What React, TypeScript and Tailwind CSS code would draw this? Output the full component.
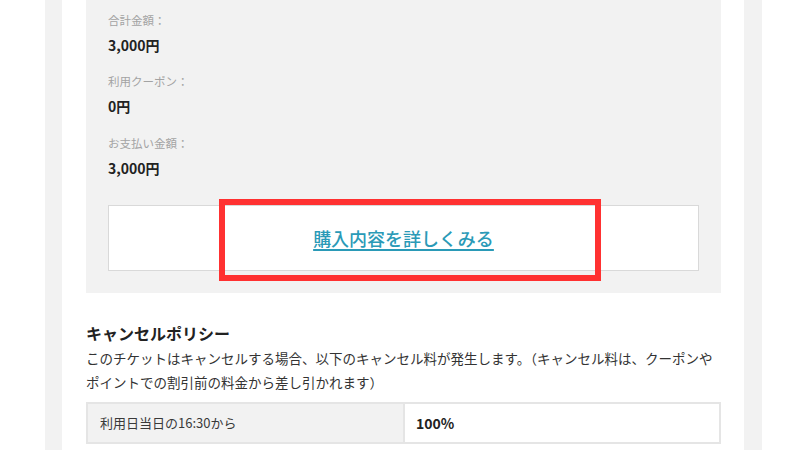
import React from "react";

const rows = [
  { label: "合計金額：", value: "3,000円" },
  { label: "利用クーポン：", value: "0円" },
  { label: "お支払い金額：", value: "3,000円" },
];

const App = () => {
  return (
    <div
      className="w-[800px] h-[450px] overflow-hidden bg-white pl-[45px]"
      style={{ fontFamily: '"Noto Sans CJK JP", "Noto Sans", sans-serif' }}
    >
      <div className="w-[717px] h-full border-l-[17px] border-r-[18px] border-[#f2f2f2] pl-[24px] pr-[23px]">
        {/* Purchase summary start */}
        <div className="relative bg-[#f2f2f2] pt-[10px] pb-[22px] px-[22px]">
          <div className="flex flex-col gap-[14px]">
            {rows.map((r, i) => (
              <div key={r.label} className={`flex flex-col gap-[3px] ${i === 2 ? "mt-[1px]" : ""}`}>
                <div className="h-[20px] leading-[20px] text-[11.5px] text-[#a3a3a3]">{r.label}</div>
                <div className="h-[24px] leading-[24px] text-[14px] font-bold text-[#222]">{r.value}</div>
              </div>
            ))}
          </div>
          <div className="mt-[25px] h-[66px] bg-white border border-[#d9d9d9] flex items-center justify-center">
            <a className="text-[18px] font-medium text-[#2a9ab7] underline underline-offset-[3px] decoration-[1.5px] leading-none">
              購入内容を詳しくみる
            </a>
          </div>
          <div className="absolute left-[133px] top-[199px] w-[382px] h-[82px] border-[6px] border-[#ff3131]" />
        </div>
        {/* Purchase summary end */}

        {/* Cancel policy start */}
        <div className="mt-[28px] h-[24px] leading-[24px] text-[16px] font-bold text-[#222]">
          キャンセルポリシー
        </div>
        <p className="mt-[1px] text-[13.5px] leading-[24px] text-[#333]">
          このチケットはキャンセルする場合、以下のキャンセル料が発生します。（キャンセル料は、クーポンや
          <br />
          ポイントでの割引前の料金から差し引かれます）
        </p>
        <div className="mt-[8px] flex h-[42px] border-2 border-[#e5e5e5]">
          <div className="w-[317px] bg-[#f2f2f2] border-r-2 border-[#e5e5e5] flex items-center pl-[12px] text-[13px] text-[#3a3a3a]">
            利用日当日の16:30から
          </div>
          <div className="flex-1 flex items-center pl-[11px] text-[14px] font-bold text-[#222]">100%</div>
        </div>
        {/* Cancel policy end */}
      </div>
    </div>
  );
};

export default App;
